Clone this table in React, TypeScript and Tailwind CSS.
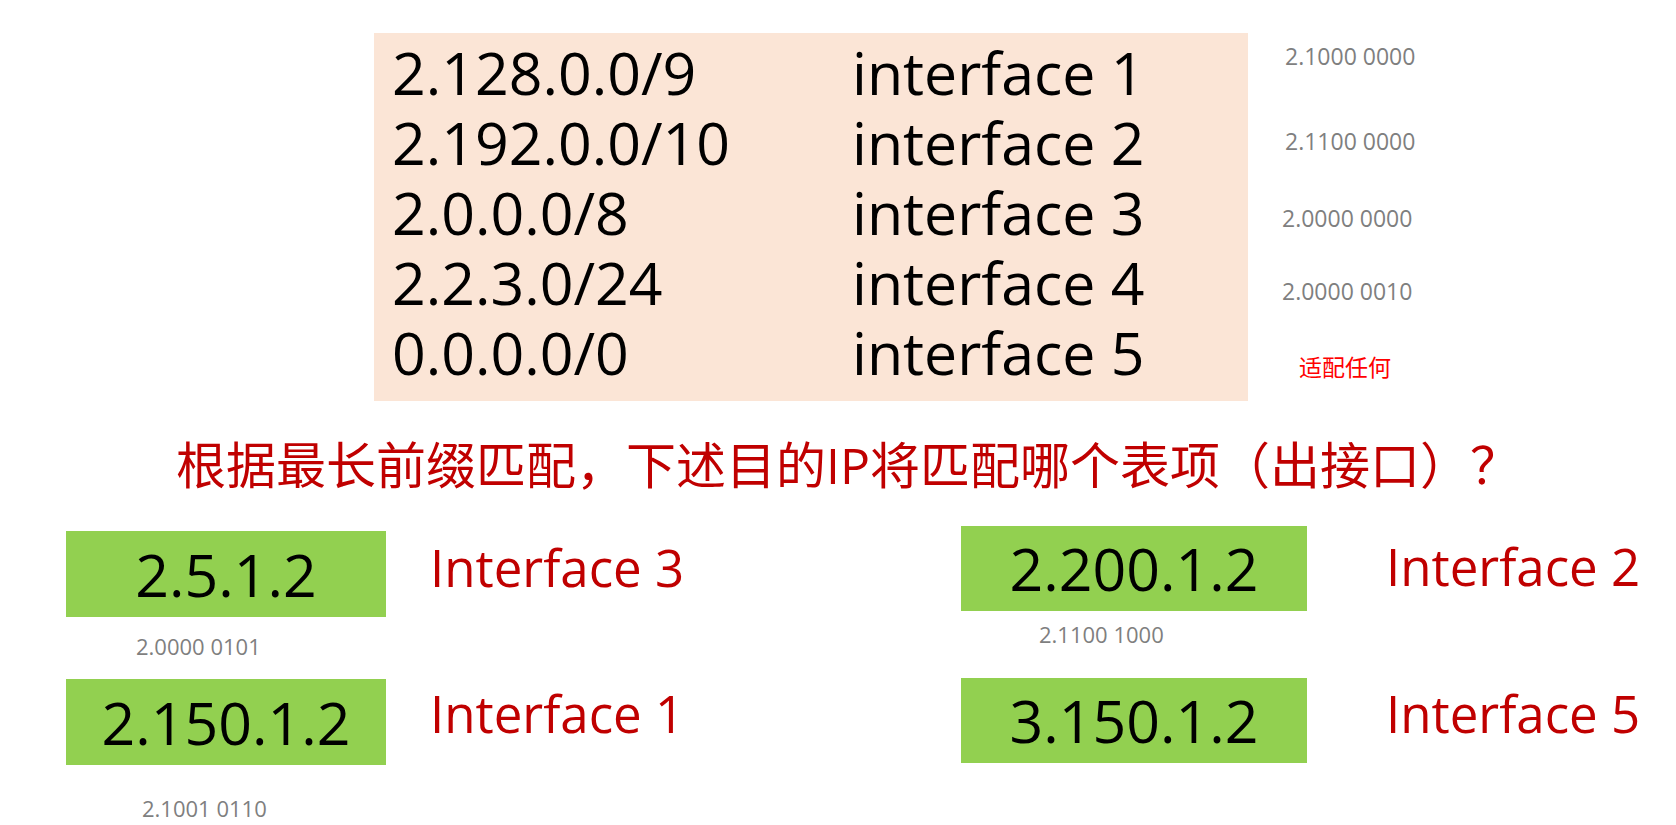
import React from "react";

const rows = [
  ["2.128.0.0/9", "interface 1"],
  ["2.192.0.0/10", "interface 2"],
  ["2.0.0.0/8", "interface 3"],
  ["2.2.3.0/24", "interface 4"],
  ["0.0.0.0/0", "interface 5"],
];

export default function App() {
  return (
    <div className="relative w-[1676px] h-[825px] overflow-hidden bg-white font-['Open_Sans','Noto_Sans_CJK_SC',sans-serif]">
      {/* Top: routing table + binary notes */}
      <div className="flex items-start pl-[374px] pt-[33px]">
        <div className="w-[874px] h-[368px] bg-[#fbe5d6] pl-[18px] pt-[4px] text-black">
          {rows.map(([p, i]) => (
            <div key={p} className="flex h-[70px] items-center text-[59px] leading-[70px] whitespace-nowrap">
              <div className="w-[460px]">{p}</div>
              <div>{i}</div>
            </div>
          ))}
        </div>
        <div className="ml-[34px] flex flex-col text-[23px] leading-[30px] text-[#7f7f7f] whitespace-nowrap">
          <div className="mt-[8px] ml-[3px]">2.1000 0000</div>
          <div className="mt-[55px] ml-[3px]">2.1100 0000</div>
          <div className="mt-[47px]">2.0000 0000</div>
          <div className="mt-[43px]">2.0000 0010</div>
          <div className="mt-[46px] ml-[17px] text-[23px] text-[#ff0000]">适配任何</div>
        </div>
      </div>

      {/* Question */}
      <div className="mt-[34px] pl-[176px] h-[60px] text-[50px] leading-[60px] text-[#c00000] whitespace-nowrap">
        根据最长前缀匹配，下述目的IP将匹配哪个表项（出接口）？
      </div>

      {/* Answers */}
      <div className="grid grid-cols-[895px_1fr] pl-[66px] whitespace-nowrap">
        <div className="mt-[36px] flex flex-col">
          <div className="flex items-start">
            <div className="flex flex-col">
              <div className="w-[320px] h-[86px] bg-[#92d050] flex items-center justify-center text-[59px] text-black">2.5.1.2</div>
              <div className="ml-[70px] h-[30px] mt-[14px] text-[22px] leading-[30px] text-[#7f7f7f]">2.0000 0101</div>
            </div>
            <div className="ml-[44px] h-[72px] flex items-center text-[51px] text-[#c00000]">Interface 3</div>
          </div>
          <div className="flex items-start mt-[18px]">
            <div className="flex flex-col">
              <div className="w-[320px] h-[86px] bg-[#92d050] flex items-center justify-center text-[59px] text-black">2.150.1.2</div>
              <div className="ml-[76px] h-[30px] mt-[28px] text-[22px] leading-[30px] text-[#7f7f7f]">2.1001 0110</div>
            </div>
            <div className="ml-[44px] h-[68px] flex items-center text-[51px] text-[#c00000]">Interface 1</div>
          </div>
        </div>

        <div className="mt-[31px] flex flex-col">
          <div className="flex items-start">
            <div className="flex flex-col">
              <div className="w-[346px] h-[85px] bg-[#92d050] flex items-center justify-center text-[59px] text-black">2.200.1.2</div>
              <div className="ml-[78px] h-[30px] mt-[8px] text-[22px] leading-[30px] text-[#7f7f7f]">2.1100 1000</div>
            </div>
            <div className="ml-[79px] h-[80px] flex items-center text-[51px] text-[#c00000]">Interface 2</div>
          </div>
          <div className="flex items-start mt-[29px]">
            <div className="w-[346px] h-[85px] bg-[#92d050] flex items-center justify-center text-[59px] text-black">3.150.1.2</div>
            <div className="ml-[79px] h-[70px] flex items-center text-[51px] text-[#c00000]">Interface 5</div>
          </div>
        </div>
      </div>
    </div>
  );
}
